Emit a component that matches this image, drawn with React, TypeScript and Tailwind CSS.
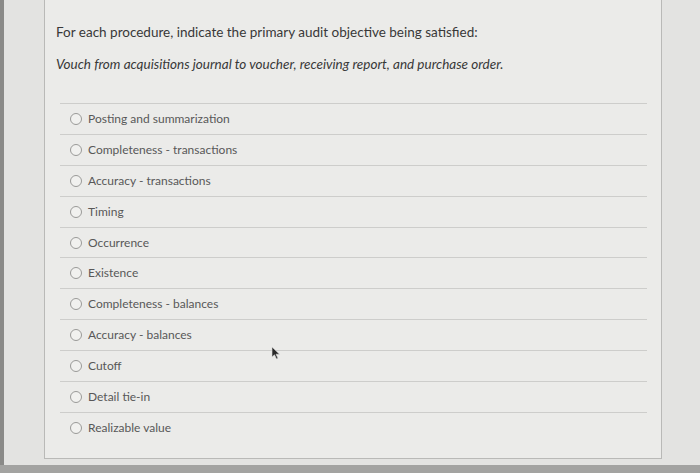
import React from 'react';

const options = [
  'Posting and summarization',
  'Completeness - transactions',
  'Accuracy - transactions',
  'Timing',
  'Occurrence',
  'Existence',
  'Completeness - balances',
  'Accuracy - balances',
  'Cutoff',
  'Detail tie-in',
  'Realizable value',
];

function Radio() {
  return <span className="block w-[12px] h-[12px] rounded-full border border-[#9a9a98] bg-[#f1f1ef] shrink-0" />;
}

export default function App() {
  return (
    <div
      className="w-[700px] h-[473px] overflow-hidden bg-[#e3e3e1] flex flex-col relative"
      style={{ fontFamily: 'Lato, "Open Sans", sans-serif' }}
    >
      <div className="flex flex-1">
        <div className="w-[4px] bg-[#8a8a88]" />
        <div className="flex-1 pl-[40px] pr-[38px]">
          {/* question panel */}
          <div className="mt-[-10px] h-[469px] bg-[#ebebe9] border border-[#b9b9b7] flex flex-col">
            <div className="pl-[11px] pt-[31px]">
              <p className="text-[13.5px] text-[#383838] leading-[20px]">
                For each procedure, indicate the primary audit objective being satisfied:
              </p>
              <p className="mt-[12px] text-[13.5px] italic text-[#383838] leading-[20px]">
                Vouch from acquisitions journal to voucher, receiving report, and purchase order.
              </p>
            </div>

            <div className="mt-[29px] ml-[15px] mr-[14px]">
              {options.map((o) => (
                <div
                  key={o}
                  className="h-[30.9px] flex items-center gap-[6px] pl-[10px] border-t border-[#cdcdcb]"
                >
                  <Radio />
                  <span className="text-[12px] text-[#585858] leading-none">{o}</span>
                </div>
              ))}
            </div>
          </div>
        </div>
      </div>
      <div className="h-[8px] bg-[#a3a3a1]" />

      {/* mouse pointer */}
      <svg className="absolute left-[271px] top-[346px]" width="10" height="14" viewBox="0 0 10 14">
        <path d="M1 1 L1 11 L3.5 8.8 L5.5 13 L7 12.3 L5 8.2 L8.5 8.2 Z" fill="#2a2a2a" stroke="#dcdcdc" strokeWidth="0.6" />
      </svg>
    </div>
  );
}
